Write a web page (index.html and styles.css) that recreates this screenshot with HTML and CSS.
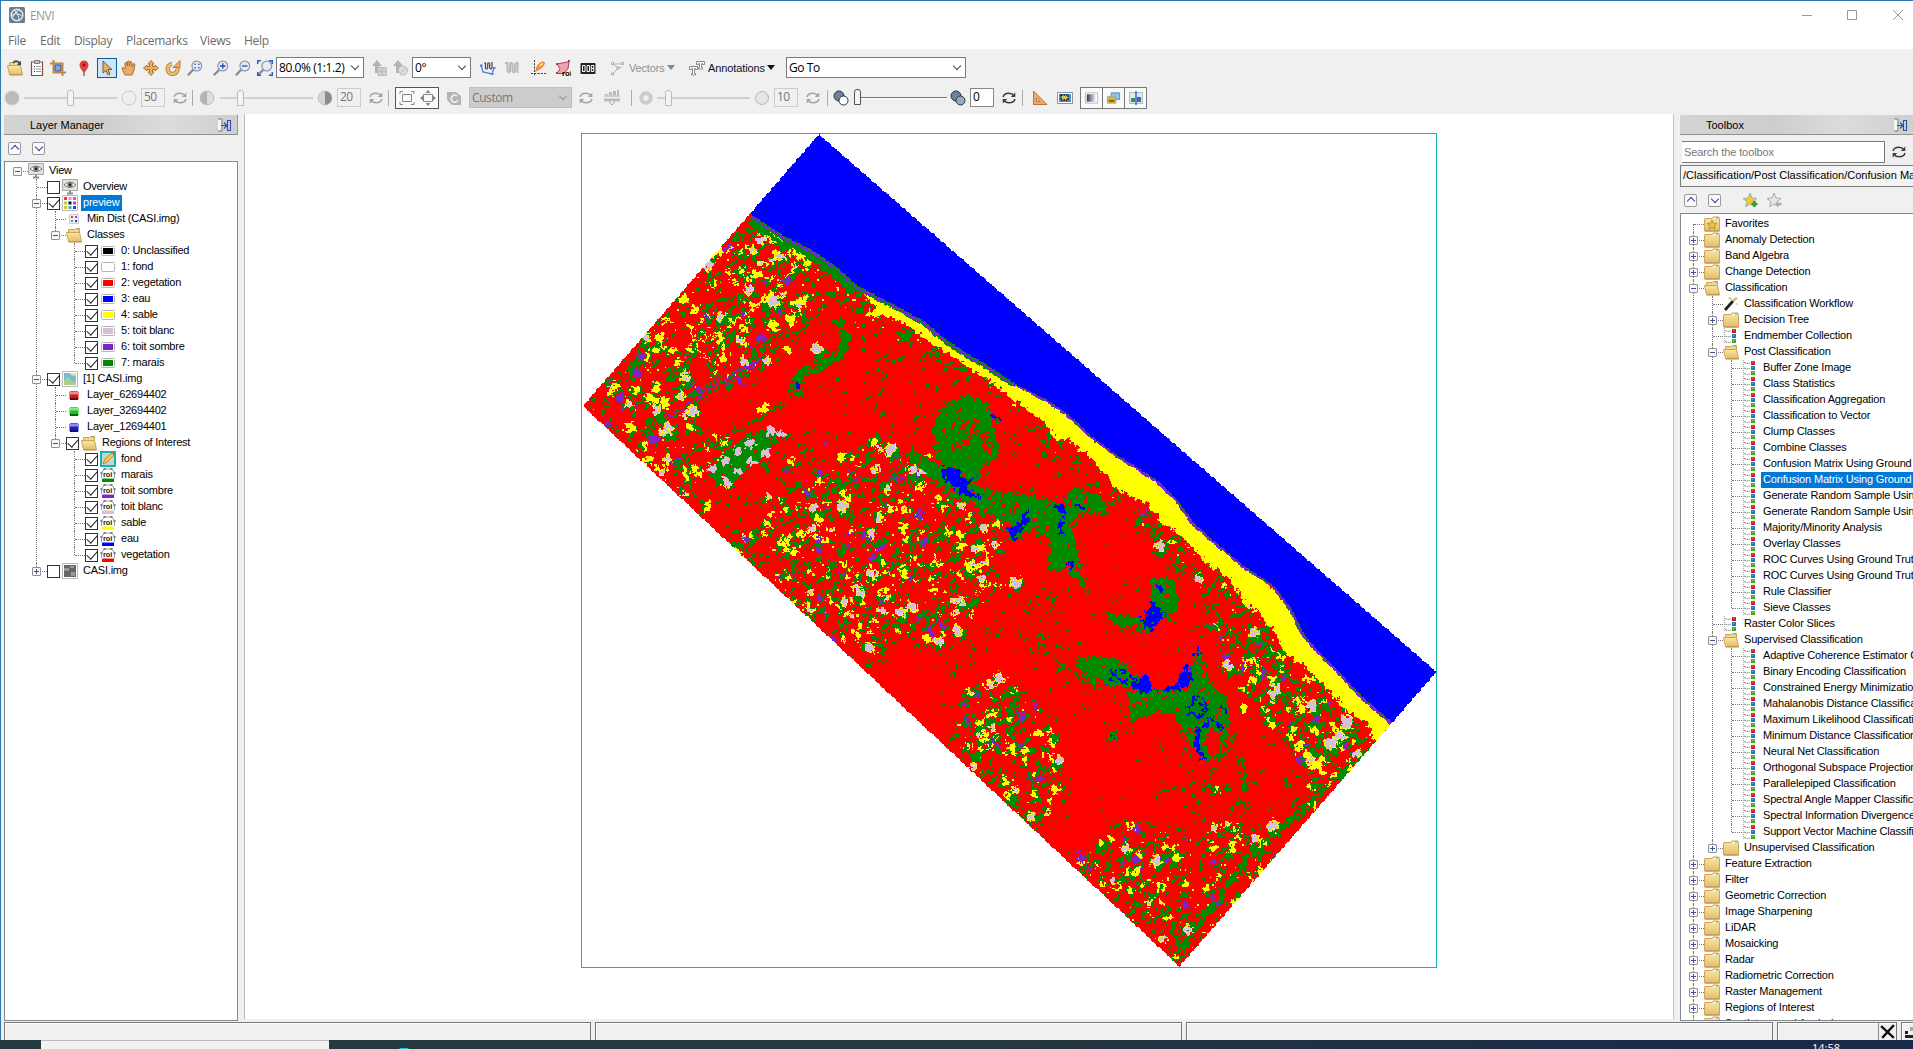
FILE: index.html
```html
<!DOCTYPE html>
<html lang="en">
<head>
<meta charset="utf-8">
<title>ENVI</title>
<link rel="stylesheet" href="styles.css">
</head>
<body>
<svg class="defs" width="0" height="0" aria-hidden="true">
  <defs>
    <linearGradient id="gold" x1="0" y1="0" x2="0" y2="1"><stop offset="0" stop-color="#fbe7a6"/><stop offset="1" stop-color="#e3bd6c"/></linearGradient>
    <linearGradient id="ramp"><stop offset="0" stop-color="#2b3a4c"/><stop offset="1" stop-color="#fff"/></linearGradient>
  </defs>
  <symbol id="folder" viewBox="0 0 16 16"><path d="M1 2.500h7l1-1.500h6v2h.5v12H.5v-12z" fill="url(#gold)" stroke="#cfa453"/><path d="M1 15h14.500" stroke="#b98d45"/><path d="M9 2.500h5" stroke="#fff6d0"/><path d="M12 2h2" stroke="#3cb0dc"/></symbol>
  <symbol id="open" viewBox="0 0 16 16"><path d="M2.500 13V2.500h6l1-1h4V8" fill="#f2d68c" stroke="#cfa453"/><path d="M.5 5.500h13l2 9h-13z" fill="url(#gold)" stroke="#cfa453"/><path d="M2.500 15h13" stroke="#b98d45"/><path d="M11 2h2" stroke="#3cb0dc"/></symbol>
  <symbol id="fav" viewBox="0 0 16 16"><use href="#folder"/><path d="M8 4l1.300 3.200 3.700.3-2.800 2.300.9 3.500L8 11.400l-3.100 1.900.9-3.500L3 7.500l3.700-.3z" fill="#e8c63c" stroke="#a8862a" stroke-width=".7"/></symbol>
  <symbol id="eye" viewBox="0 0 16 16"><path d="M.5.5h15v11H.5z" fill="#e6e3dc" stroke="#aaa59a"/><path d="M5 14.500h6M8 12v2" stroke="#8f8f8f" stroke-width="2"/><path d="M2 6q6-6 12 0-6 5-12 0z" fill="#fff" stroke="#777"/><circle cx="8" cy="5.700" r="2.700" fill="#6f8290"/><circle cx="8" cy="5.700" r="1.200" fill="#222"/></symbol>
  <symbol id="cls" viewBox="0 0 16 16"><path d="M.5.5h15v15H.5z" fill="#fff" stroke="#bbb"/><path d="M2 2h3v3H2z" fill="#f33"/><path d="M6.500 2h3v3h-3z" fill="#e8e"/><path d="M11 2h3v3h-3z" fill="#f4a"/><path d="M2 6.500h3v3H2z" fill="#9d4"/><path d="M6.500 6.500h3v3h-3z" fill="#111"/><path d="M11 6.500h3v3h-3z" fill="#c3e"/><path d="M2 11h3v3H2z" fill="#eb2"/><path d="M6.500 11h3v3h-3z" fill="#2bd"/><path d="M11 11h3v3h-3z" fill="#43e"/></symbol>
  <symbol id="mini" viewBox="0 0 16 16"><path d="M3.500 3.500h9v9h-9z" fill="#eee" stroke="#ccc"/><path d="M5 5h2v2H5z" fill="#e33"/><path d="M9 5h2v2H9z" fill="#b3d"/><path d="M5 9h2v2H5z" fill="#3b5"/><path d="M9 9h2v2H9z" fill="#33d"/></symbol>
  <symbol id="sw" viewBox="0 0 16 16"><rect x="1.500" y="3.500" width="13" height="9" rx="1" fill="#fff" stroke="#b5b5b5"/><path d="M3 5h10v6H3z" fill="currentColor"/></symbol>
  <symbol id="cube" viewBox="0 0 16 16"><rect x="3.500" y="4" width="9" height="9" rx="1.500" fill="currentColor"/><path d="M4 4.500h8v3H4z" fill="#fff" opacity=".5"/><path d="M4 11h8v2H4z" opacity=".5"/></symbol>
  <symbol id="img" viewBox="0 0 16 16"><path d="M.5.5h15v15H.5z" fill="#fff" stroke="#bbb"/><path d="M2 2h12v12H2z" fill="#79b9d8"/><path d="M2 9q4-5 7 0t5-2v7H2z" fill="#a9cf8d"/><path d="M7 2q3 4 7 2V2z" fill="#f1e2a0"/></symbol>
  <symbol id="imgg" viewBox="0 0 16 16"><path d="M.5.5h15v15H.5z" fill="#fff" stroke="#bbb"/><path d="M2 2h12v12H2z" fill="#666"/><path d="M2 5h5v3H2zM9 9h4v4H9zM8 3h4v2H8z" fill="#999"/></symbol>
  <symbol id="roi" viewBox="0 0 16 16"><path d="M1.500 11V5.500L4.500 2h7l3 3.500V11" fill="#fff" stroke="#999"/><path d="M3.500 1h2v2h-2zM10.500 1h2v2h-2zM.5 5h2v2h-2zM13.500 5h2v2h-2z" fill="#777"/><text x="3" y="10" font-size="7.500" font-weight="bold" fill="#222" font-family="Liberation Sans,sans-serif">roi</text><path d="M2 11.500h12V15H2z" fill="currentColor"/></symbol>
  <symbol id="edit" viewBox="0 0 16 16"><path d="M1 1h14v14H1z" fill="#cfd0c8" stroke="#12b5b5" stroke-width="2"/><path d="M3 13l2-5 7-6 2 2-7 7z" fill="#f0cf54" stroke="#a57a2a" stroke-width=".8"/><path d="M11.500 2l2 2 1.500-1.500L13 .5z" fill="#e25d4a"/></symbol>
  <symbol id="tool" viewBox="0 0 16 16"><path d="M1.500 0v16" stroke="#aaa" stroke-dasharray="1 1"/><path d="M2 2.500l3 1 3-.5M2 8l3 1 3-.5M2 13.500l3 1 3-.5" stroke="#888" fill="none" stroke-dasharray="2 .7"/><path d="M9 1h4v4H9z" fill="#d11a1a"/><path d="M9 6h4v4H9z" fill="#1378c4"/><path d="M9 11h4v4H9z" fill="#4aa512"/><path d="M10 2h2M10 7h2M10 12h2" stroke="#fff" opacity=".4"/></symbol>
  <symbol id="wand" viewBox="0 0 16 16"><path d="M2 14L10 5" stroke="#222" stroke-width="2.800"/><path d="M10 5l2-2" stroke="#bbb" stroke-width="2.800"/><path d="M7 1v3M5.500 2.500h3M13 1v3M11.500 2.500h3M14 7v2" stroke="#d9b83c"/></symbol>
  <symbol id="ref" viewBox="0 0 16 16"><path d="M2 7q1-3.800 6-3.800 3 0 5 2.300M14 9q-1 3.800-6 3.800-3 0-5-2.300" fill="none" stroke="currentColor" stroke-width="1.500"/><path d="M14.300 2.500v4.500H9.800zM1.700 13.500V9h4.500z" fill="currentColor"/></symbol>
  <symbol id="half" viewBox="0 0 16 16"><circle cx="8" cy="8" r="6.800" fill="#ddd" stroke="#bbb"/><path d="M8 1.200a6.800 6.800 0 0 0 0 13.600z" fill="#b4b4b4"/></symbol>
  <symbol id="mag" viewBox="0 0 16 16"><path d="M1.500 14.500L6 10" stroke="#8d8d8d" stroke-width="2.400" stroke-linecap="round"/><circle cx="9.800" cy="6" r="4.900" fill="#e4ecf5" stroke="#8f9bab" stroke-width="1.200"/></symbol>
  <symbol id="exp" viewBox="0 0 16 16"><path d="M1 1h4v12H1" fill="#f4f4f4" stroke="#777"/><path d="M4 7.500h5M7 4.500l3 3-3 3M10.500 2.500h3v10h-3z" fill="none" stroke="#2a4db0" stroke-width="1.100"/></symbol>
  <symbol id="two" viewBox="0 0 16 16"><circle cx="6" cy="6" r="5" fill="#71809b" stroke="#2b3448"/><circle cx="10.500" cy="10.500" r="4.500" fill="currentColor" stroke="#2b3448"/></symbol>
  <symbol id="star" viewBox="0 0 16 16"><path d="M8 1l2 5 5 .4-4 3.300 1.300 5L8 12l-4.300 2.700 1.300-5-4-3.300L6 6z" fill="currentColor" stroke="#aaa"/></symbol>
</svg>

<div class="win">
  <header class="title">
    <svg class="logo" viewBox="0 0 16 16"><rect width="16" height="16" rx="1.500" fill="#6c7e8c"/><circle cx="8" cy="8" r="5.800" fill="none" stroke="#dfe6ea" stroke-width="1.400"/><path d="M3 12Q7 1 12 4M2 9q6-5 12 1M5 3q5 3 5 11" fill="none" stroke="#e5ebee"/></svg>
    <span class="name">ENVI</span>
    <svg class="ctl" viewBox="0 0 120 14"><path d="M14 7.500h10" stroke="#999"/><path d="M59.500 2.500h9v9h-9z" fill="none" stroke="#999"/><path d="M105 2l10 10M115 2L105 12" stroke="#999"/></svg>
  </header>
  <nav class="menu"><span>File</span><span>Edit</span><span>Display</span><span>Placemarks</span><span>Views</span><span>Help</span></nav>

  <div class="bar bar1">
    <svg viewBox="0 0 16 16"><use href="#open"/><path d="M6 3q3-4 6 0" fill="none" stroke="#345" stroke-width="1.500"/><path d="M14 1v4h-4z" fill="#345"/></svg>
    <svg viewBox="0 0 16 16"><path d="M1.500 2h11v13.500h-11z" fill="#fff" stroke="#8a4a35" stroke-width="1.200"/><path d="M4.500.5h5v3h-5z" fill="#c4c4c4" stroke="#777"/><path d="M4 6.500h1M4 9h1M4 11.500h1" stroke="#345"/><path d="M6 6.500h5M6 9h5M6 11.500h5" stroke="#999"/></svg>
    <svg viewBox="0 0 16 16"><path d="M0 3.500h12.500V16M3.500 0v12.500H16" fill="none" stroke="#c98537" stroke-width="2"/><path d="M5 5h6v6H5z" fill="#7aa7e0" stroke="#2950b0"/></svg>
    <svg viewBox="0 0 16 16"><path d="M7 16V9" stroke="#777" stroke-width="1.500"/><path d="M7 13Q2.500 8 2.500 5a4.500 4.500 0 0 1 9 0q0 3-4.500 8z" fill="#e0423f"/><circle cx="7" cy="4.800" r="1.600" fill="#8d1717"/></svg>
    <span class="sel"><svg viewBox="0 0 16 16"><path d="M4 1v12l3-2.500L9 15l2-1-2-4.500h4z" fill="#e2b069" stroke="#7a5a33"/></svg></span>
    <svg viewBox="0 0 16 16"><path d="M4 15Q1 10 1 8q1-1.500 3 1V3q1-1.500 2 0l.3 3V1.500q1-1.500 2 0V6l.7-4q1-1 1.800 0L11 7l1-3q1.500-.8 2 .3-1 8-3 10.700z" fill="#e7ac68" stroke="#a56a2c" stroke-width=".9"/></svg>
    <svg viewBox="0 0 16 16"><path d="M8 .5l3 3.500H9.500v2.500H12V5l3.500 3-3.500 3V9.500H9.500V12H11l-3 3.500L5 12h1.500V9.500H4V11L.5 8 4 5v1.500h2.500V4H5z" fill="#e9b063" stroke="#a8702e"/></svg>
    <svg viewBox="0 0 16 16"><path d="M12.500 8A5 5 0 1 1 7 4" fill="none" stroke="#b9792f" stroke-width="4.200"/><path d="M12.500 8A5 5 0 1 1 7 4" fill="none" stroke="#eebb72" stroke-width="2.600"/><path d="M15 .5v7H8z" fill="#e9b063" stroke="#b9792f"/></svg>
    <svg viewBox="0 0 16 16"><use href="#mag"/><path d="M8 5V4h1M11 4h1v1M12 7v1h-1M9 8H8V7" fill="none" stroke="#2447b5"/></svg>
    <svg viewBox="0 0 16 16"><use href="#mag"/><path d="M7 6h5.500M9.800 3.300v5.500" stroke="#2447b5" stroke-width="1.300"/></svg>
    <svg viewBox="0 0 16 16"><use href="#mag"/><path d="M7 6h5.500" stroke="#2447b5" stroke-width="1.300"/></svg>
    <svg viewBox="0 0 16 16"><use href="#mag"/><path d="M.7 4V.7H4M12 .7h3.300V4M15.300 12v3.300H12M4 15.300H.7V12" fill="none" stroke="#2458d5" stroke-width="1.500"/></svg>
    <span class="combo"><b class="wide">80.0% (1:1.2)</b><i class="chev"></i></span>
    <svg viewBox="0 0 16 16"><path d="M6 0l5 6H8v7H4V6H1z" fill="#b3b3b3"/><path d="M7 7.500h8.500v8H7zM7 11.500h8.500M11 7.500v8" fill="#d2d2d2" stroke="#bbb"/></svg>
    <svg viewBox="0 0 16 16"><path d="M6 0l5 6H8v7H4V6H1z" fill="#b3b3b3"/><circle cx="11" cy="10.500" r="4.500" fill="#ddd" stroke="#bbb"/><path d="M8 14l6-7" stroke="#bbb"/></svg>
    <span class="combo"><b class="wide">0°</b><i class="chev"></i></span>
    <svg viewBox="0 0 16 16"><path d="M1 5l2 7 9 2 2-6" fill="none" stroke="#4f7fd6" stroke-width="1.300"/><path d="M0 4.500h2.500v2H0zM11 13h2.500v2H11zM13 7h2.500v2H13z" fill="#4f7fd6"/><path d="M4 3h1.500v5q1.200 2 2.200 0V3.500q1-1.500 2 0V8q1.200 2 2.300 0V2" fill="none" stroke="#444" stroke-width="1.200"/></svg>
    <svg viewBox="0 0 16 16"><path d="M1 3h2.500v8q1.300 2.500 2.600 0V4q1.200-2 2.400 0v7q1.300 2.500 2.600 0V4q1-1.500 2.400-1v10" fill="none" stroke="#b9b9b9" stroke-width="2"/></svg>
    <svg viewBox="0 0 16 16"><path d="M3.500 0v16M0 13.500h16" stroke="#333" stroke-dasharray="2 1.300"/><path d="M4 12Q5 4 11 1.500q3-.5 3 2Q12 9 4 12z" fill="#f08a35"/><path d="M8 7q1-4 4-4 1 2-4 4z" fill="#ffe08a"/></svg>
    <svg viewBox="0 0 16 16"><path d="M2 4l8-1.500 4-1-1 7-4 5H2l3-5z" fill="#e9a6ae" stroke="#b43a4c"/><path d="M1 3h2v2H1zM13 0h2v2h-2zM1 12h2v2H1z" fill="#b43a4c"/><text x="7" y="15.500" font-size="8" font-weight="bold" font-family="Liberation Sans,sans-serif">roi</text></svg>
    <svg viewBox="0 0 16 16"><rect x=".5" y="3" width="15" height="11" rx="1" fill="#222"/><path d="M2.500 5.500h2.500v6H2.500zM7 5.500h2.500v6H7zM11.300 5.500h2.500v6h-2.500zM11.300 8.500h2.500" fill="none" stroke="#fff"/></svg>
    <svg viewBox="0 0 16 16"><path d="M2 4h10M2 4l5 4-5 6M7 8l4-1" fill="none" stroke="#b5b5b5"/><path d="M.5 2.500h2v2h-2zM10.500 2.500h2v2h-2zM6 7h2v2H6zM.5 13h2v2h-2z" fill="#fff" stroke="#aaa"/></svg>
    <b class="off">Vectors</b><i class="caret off"></i>
    <svg viewBox="0 0 16 16"><path d="M7.500 1.500h8v3h-2v-1h-1v4h1v1.500h-4V7.500h1v-4h-1v1h-2z" fill="#fff" stroke="#888"/><path d="M.5 6.500h8v3h-2v-1h-1v5h1V15h-4v-1.500h1v-5h-1v1h-2z" fill="#fff" stroke="#888"/></svg>
    <b class="ann">Annotations</b><i class="caret"></i>
    <span class="combo goto"><b class="wide">Go To</b><i class="chev"></i></span>
  </div>

  <div class="bar bar2">
    <svg viewBox="0 0 16 16"><circle cx="8" cy="8" r="7" fill="#bbb" stroke="#ccc"/></svg>
    <span class="slide"><i class="thumb m"></i></span>
    <svg viewBox="0 0 16 16"><circle cx="8" cy="8" r="7" fill="#eee" stroke="#c8c8c8"/></svg>
    <span class="inp off">50</span>
    <svg class="dim" viewBox="0 0 16 16"><use href="#ref"/></svg><i class="sep"></i>
    <svg viewBox="0 0 16 16"><use href="#half"/></svg>
    <span class="slide"><i class="thumb l"></i></span>
    <svg viewBox="0 0 16 16"><circle cx="8" cy="8" r="6.800" fill="#d5d5d5" stroke="#bbb"/><path d="M8 1.200a6.800 6.800 0 0 1 0 13.600z" fill="#8d8d8d"/></svg>
    <span class="inp off">20</span>
    <svg class="dim" viewBox="0 0 16 16"><use href="#ref"/></svg><i class="sep"></i>
    <span class="pair"><svg viewBox="0 0 16 16"><path d="M3.500 4.500h9v7h-9zM1 4V1.500h3M12 1.500h3V4M15 12v2.500h-3M4 14.500H1V12" fill="none" stroke="#888"/></svg><svg viewBox="0 0 16 16"><path d="M3.500 4.500h9v7h-9z" fill="none" stroke="#888"/><path d="M8 0l2.500 3h-5zM8 16l2.500-3h-5zM0 8l3-2.500v5zM16 8l-3-2.500v5z" fill="#888"/></svg></span>
    <svg viewBox="0 0 16 16"><path d="M1 2h9l5 4v9H6L1 10z" fill="#b3b3b3"/><path d="M11 6a3.500 3.500 0 1 0 1 4" fill="none" stroke="#eee" stroke-width="1.800"/></svg>
    <span class="combo dis"><b class="wide">Custom</b><i class="chev"></i></span>
    <svg class="dim" viewBox="0 0 16 16"><use href="#ref"/></svg>
    <svg viewBox="0 0 16 16"><path d="M0 6h16" stroke="#aaa"/><path d="M1 5V4h3v1zM5 5V2h3v3zM9 5V1h3v4zM13 5V0h2v5zM0 8.500h16v3H0z" fill="#bbb"/><path d="M6 10h4v3l-2 2-2-2z" fill="#eee" stroke="#aaa"/></svg><i class="sep"></i>
    <svg viewBox="0 0 16 16"><circle cx="8" cy="8" r="4.800" fill="#eee" stroke="#ccc" stroke-width="4"/></svg>
    <span class="slide"><i class="thumb s"></i></span>
    <svg viewBox="0 0 16 16"><circle cx="8" cy="8" r="6.500" fill="#e6e6e6" stroke="#b5b5b5"/></svg>
    <span class="inp off">10</span>
    <svg class="dim" viewBox="0 0 16 16"><use href="#ref"/></svg><i class="sep"></i>
    <svg class="cw" viewBox="0 0 16 16"><use href="#two"/></svg>
    <span class="slide on"><i class="thumb z"></i></span>
    <svg class="cg" viewBox="0 0 16 16"><use href="#two"/></svg>
    <span class="inp">0</span>
    <svg class="dark" viewBox="0 0 16 16"><use href="#ref"/></svg><i class="sep"></i>
    <svg viewBox="0 0 16 16"><path d="M1.500 1v13.500H15zM4.500 8v3.500H8z" fill="#e6aa6c" fill-rule="evenodd" stroke="#b87838"/></svg>
    <svg viewBox="0 0 16 16"><path d="M.5 2.500h15v11H.5z" fill="#fff" stroke="#8296a8"/><path d="M2 4h12v8H2z" fill="#4f8fc4"/><path d="M4 5h7v5H4z" fill="#d9bd52" stroke="#111" stroke-width="1.300" stroke-dasharray="1.500 1"/></svg>
    <span class="trio">
      <svg viewBox="0 0 16 16"><path d="M1.500 2.500h13v11h-13z" fill="#fff" stroke="#a9bccb"/><path d="M3 4h10v8H3z" fill="url(#ramp)"/></svg>
      <svg viewBox="0 0 16 16"><path d="M5.500 2.500h9v7h-9z" fill="#8fc1ea" stroke="#5b8ab8"/><path d="M1.500 6.500h9v7h-9z" fill="#dfb52c" stroke="#9aa7b5"/><path d="M3 10h6v2H3z" fill="#7d6313"/></svg>
      <svg viewBox="0 0 16 16"><path d="M1.500 2.500h13v11h-13z" fill="#dceaf3" stroke="#a9bccb"/><path d="M3 8h4v4H3z" fill="#3a8a6a"/><path d="M9 7h4v5H9z" fill="#567"/><path d="M8 1v14" stroke="#2447d5" stroke-width="1.300"/></svg>
    </span>
  </div>

  <main class="body">
    <section class="left">
      <div class="head"><span>Layer Manager</span><svg viewBox="0 0 16 16"><use href="#exp"/></svg></div>
      <div class="ud"><i class="up"></i><i class="dn"></i></div>
      <div class="tbox">
        <ul class="tree">
          <li class="solo"><div class="r"><i class="x m"></i><svg><use href="#eye"/></svg><span>View</span></div>
            <ul>
              <li><div class="r"><i class="cb"></i><svg><use href="#eye"/></svg><span>Overview</span></div></li>
              <li><div class="r"><i class="x m"></i><i class="cb on"></i><svg><use href="#cls"/></svg><span class="hl">preview</span></div>
                <ul>
                  <li><div class="r"><svg><use href="#mini"/></svg><span>Min Dist (CASI.img)</span></div></li>
                  <li><div class="r"><i class="x m"></i><svg><use href="#open"/></svg><span>Classes</span></div>
                    <ul>
                      <li><div class="r"><i class="cb on"></i><svg class="k0"><use href="#sw"/></svg><span>0: Unclassified</span></div></li>
                      <li><div class="r"><i class="cb on"></i><svg class="k1"><use href="#sw"/></svg><span>1: fond</span></div></li>
                      <li><div class="r"><i class="cb on"></i><svg class="k2"><use href="#sw"/></svg><span>2: vegetation</span></div></li>
                      <li><div class="r"><i class="cb on"></i><svg class="k3"><use href="#sw"/></svg><span>3: eau</span></div></li>
                      <li><div class="r"><i class="cb on"></i><svg class="k4"><use href="#sw"/></svg><span>4: sable</span></div></li>
                      <li><div class="r"><i class="cb on"></i><svg class="k5"><use href="#sw"/></svg><span>5: toit blanc</span></div></li>
                      <li><div class="r"><i class="cb on"></i><svg class="k6"><use href="#sw"/></svg><span>6: toit sombre</span></div></li>
                      <li><div class="r"><i class="cb on"></i><svg class="k7"><use href="#sw"/></svg><span>7: marais</span></div></li>
                    </ul></li>
                </ul></li>
              <li><div class="r"><i class="x m"></i><i class="cb on"></i><svg><use href="#img"/></svg><span>[1] CASI.img</span></div>
                <ul>
                  <li><div class="r"><svg class="cr"><use href="#cube"/></svg><span>Layer_62694402</span></div></li>
                  <li><div class="r"><svg class="cgn"><use href="#cube"/></svg><span>Layer_32694402</span></div></li>
                  <li><div class="r"><svg class="cbl"><use href="#cube"/></svg><span>Layer_12694401</span></div></li>
                  <li><div class="r"><i class="x m"></i><i class="cb on"></i><svg><use href="#open"/></svg><span>Regions of Interest</span></div>
                    <ul>
                      <li><div class="r"><i class="cb on"></i><svg><use href="#edit"/></svg><span>fond</span></div></li>
                      <li><div class="r"><i class="cb on"></i><svg class="k7"><use href="#roi"/></svg><span>marais</span></div></li>
                      <li><div class="r"><i class="cb on"></i><svg class="k6"><use href="#roi"/></svg><span>toit sombre</span></div></li>
                      <li><div class="r"><i class="cb on"></i><svg class="k5"><use href="#roi"/></svg><span>toit blanc</span></div></li>
                      <li><div class="r"><i class="cb on"></i><svg class="k4"><use href="#roi"/></svg><span>sable</span></div></li>
                      <li><div class="r"><i class="cb on"></i><svg class="k3"><use href="#roi"/></svg><span>eau</span></div></li>
                      <li><div class="r"><i class="cb on"></i><svg class="k2"><use href="#roi"/></svg><span>vegetation</span></div></li>
                    </ul></li>
                </ul></li>
              <li><div class="r"><i class="x p"></i><i class="cb"></i><svg><use href="#imgg"/></svg><span>CASI.img</span></div></li>
            </ul></li>
        </ul>
      </div>
    </section>

    <section class="view"><div class="frame"><canvas id="map" width="854" height="833"></canvas></div></section>

    <section class="right">
      <div class="head"><span>Toolbox</span><svg viewBox="0 0 16 16"><use href="#exp"/></svg></div>
      <div class="search"><span class="field">Search the toolbox</span><svg class="dark" viewBox="0 0 16 16"><use href="#ref"/></svg></div>
      <div class="path"><span>/Classification/Post Classification/Confusion Matrix Using Ground</span></div>
      <div class="ud"><i class="up"></i><i class="dn"></i><svg class="st" viewBox="0 0 16 16"><use href="#star"/><path d="M12.500 9v6M9.500 12h6" stroke="#2f9e2f" stroke-width="2.400"/></svg><svg class="st g" viewBox="0 0 16 16"><use href="#star"/><path d="M9.500 12h6" stroke="#aaa" stroke-width="2.400"/></svg></div>
      <div class="tbox">
        <ul class="tree">
          <li class="first"><div class="r"><svg><use href="#fav"/></svg><span>Favorites</span></div></li>
          <li><div class="r"><i class="x p"></i><svg><use href="#folder"/></svg><span>Anomaly Detection</span></div></li>
          <li><div class="r"><i class="x p"></i><svg><use href="#folder"/></svg><span>Band Algebra</span></div></li>
          <li><div class="r"><i class="x p"></i><svg><use href="#folder"/></svg><span>Change Detection</span></div></li>
          <li><div class="r"><i class="x m"></i><svg><use href="#open"/></svg><span>Classification</span></div>
            <ul>
              <li><div class="r"><svg><use href="#wand"/></svg><span>Classification Workflow</span></div></li>
              <li><div class="r"><i class="x p"></i><svg><use href="#folder"/></svg><span>Decision Tree</span></div></li>
              <li><div class="r"><svg><use href="#tool"/></svg><span>Endmember Collection</span></div></li>
              <li><div class="r"><i class="x m"></i><svg><use href="#open"/></svg><span>Post Classification</span></div>
                <ul>
                  <li><div class="r"><svg><use href="#tool"/></svg><span>Buffer Zone Image</span></div></li>
                  <li><div class="r"><svg><use href="#tool"/></svg><span>Class Statistics</span></div></li>
                  <li><div class="r"><svg><use href="#tool"/></svg><span>Classification Aggregation</span></div></li>
                  <li><div class="r"><svg><use href="#tool"/></svg><span>Classification to Vector</span></div></li>
                  <li><div class="r"><svg><use href="#tool"/></svg><span>Clump Classes</span></div></li>
                  <li><div class="r"><svg><use href="#tool"/></svg><span>Combine Classes</span></div></li>
                  <li><div class="r"><svg><use href="#tool"/></svg><span>Confusion Matrix Using Ground Truth Image</span></div></li>
                  <li><div class="r"><svg><use href="#tool"/></svg><span class="hl">Confusion Matrix Using Ground Truth ROIs</span></div></li>
                  <li><div class="r"><svg><use href="#tool"/></svg><span>Generate Random Sample Using Ground Truth Image</span></div></li>
                  <li><div class="r"><svg><use href="#tool"/></svg><span>Generate Random Sample Using Ground Truth ROIs</span></div></li>
                  <li><div class="r"><svg><use href="#tool"/></svg><span>Majority/Minority Analysis</span></div></li>
                  <li><div class="r"><svg><use href="#tool"/></svg><span>Overlay Classes</span></div></li>
                  <li><div class="r"><svg><use href="#tool"/></svg><span>ROC Curves Using Ground Truth Image</span></div></li>
                  <li><div class="r"><svg><use href="#tool"/></svg><span>ROC Curves Using Ground Truth ROIs</span></div></li>
                  <li><div class="r"><svg><use href="#tool"/></svg><span>Rule Classifier</span></div></li>
                  <li><div class="r"><svg><use href="#tool"/></svg><span>Sieve Classes</span></div></li>
                </ul></li>
              <li><div class="r"><svg><use href="#tool"/></svg><span>Raster Color Slices</span></div></li>
              <li><div class="r"><i class="x m"></i><svg><use href="#open"/></svg><span>Supervised Classification</span></div>
                <ul>
                  <li><div class="r"><svg><use href="#tool"/></svg><span>Adaptive Coherence Estimator Classification</span></div></li>
                  <li><div class="r"><svg><use href="#tool"/></svg><span>Binary Encoding Classification</span></div></li>
                  <li><div class="r"><svg><use href="#tool"/></svg><span>Constrained Energy Minimization Classification</span></div></li>
                  <li><div class="r"><svg><use href="#tool"/></svg><span>Mahalanobis Distance Classification</span></div></li>
                  <li><div class="r"><svg><use href="#tool"/></svg><span>Maximum Likelihood Classification</span></div></li>
                  <li><div class="r"><svg><use href="#tool"/></svg><span>Minimum Distance Classification</span></div></li>
                  <li><div class="r"><svg><use href="#tool"/></svg><span>Neural Net Classification</span></div></li>
                  <li><div class="r"><svg><use href="#tool"/></svg><span>Orthogonal Subspace Projection Classification</span></div></li>
                  <li><div class="r"><svg><use href="#tool"/></svg><span>Parallelepiped Classification</span></div></li>
                  <li><div class="r"><svg><use href="#tool"/></svg><span>Spectral Angle Mapper Classification</span></div></li>
                  <li><div class="r"><svg><use href="#tool"/></svg><span>Spectral Information Divergence Classification</span></div></li>
                  <li><div class="r"><svg><use href="#tool"/></svg><span>Support Vector Machine Classification</span></div></li>
                </ul></li>
              <li><div class="r"><i class="x p"></i><svg><use href="#folder"/></svg><span>Unsupervised Classification</span></div></li>
            </ul></li>
          <li><div class="r"><i class="x p"></i><svg><use href="#folder"/></svg><span>Feature Extraction</span></div></li>
          <li><div class="r"><i class="x p"></i><svg><use href="#folder"/></svg><span>Filter</span></div></li>
          <li><div class="r"><i class="x p"></i><svg><use href="#folder"/></svg><span>Geometric Correction</span></div></li>
          <li><div class="r"><i class="x p"></i><svg><use href="#folder"/></svg><span>Image Sharpening</span></div></li>
          <li><div class="r"><i class="x p"></i><svg><use href="#folder"/></svg><span>LiDAR</span></div></li>
          <li><div class="r"><i class="x p"></i><svg><use href="#folder"/></svg><span>Mosaicking</span></div></li>
          <li><div class="r"><i class="x p"></i><svg><use href="#folder"/></svg><span>Radar</span></div></li>
          <li><div class="r"><i class="x p"></i><svg><use href="#folder"/></svg><span>Radiometric Correction</span></div></li>
          <li><div class="r"><i class="x p"></i><svg><use href="#folder"/></svg><span>Raster Management</span></div></li>
          <li><div class="r"><i class="x p"></i><svg><use href="#folder"/></svg><span>Regions of Interest</span></div></li>
          <li class="more"><div class="r"><svg><use href="#folder"/></svg><span>Spatiotemporal Analysis</span></div></li>
        </ul>
      </div>
    </section>
  </main>

  <footer class="status">
    <span></span><span></span><span></span>
    <span class="stop"><svg viewBox="0 0 16 16"><path d="M2 3l12 11M14 2L3 14" stroke="#111" stroke-width="2.200"/></svg></span>
    <span class="net"><svg viewBox="0 0 12 16"><path d="M2 8h3v3H2zM2 12h10v3H2z" fill="#222"/><path d="M7 4h4v4H7z" fill="#aaa"/></svg></span>
  </footer>
</div>
<div class="task"><span class="app"></span><span class="dot"></span><span class="clock">14:58</span></div>
<script src="map.js"></script>
</body>
</html>
```
FILE: styles.css
```css
* { box-sizing: border-box; }
html, body { margin: 0; height: 100%; overflow: hidden; }
body {
  width: 1913px; height: 1049px; display: flex; flex-direction: column;
  background: #fff; color: #000;
  font: 11px/16px "Liberation Sans", Arial, sans-serif; letter-spacing: -.17px;
}
ul { list-style: none; margin: 0; padding: 0; }
b, i { font-weight: normal; font-style: normal; }
svg { display: block; flex: none; width: 16px; height: 16px; }
.defs { position: absolute; width: 0; height: 0; }

.win { height: 1040px; flex: none; display: flex; flex-direction: column; border-top: 1px solid #2a7ab0; border-left: 1px solid #2a7ab0; background: #f0f0f0; overflow: hidden; }
.title { height: 28px; flex: none; background: #fff; display: flex; align-items: center; padding: 0 0 0 8px; }
.name { margin-left: 5px; color: #999; font: 12px "Open Sans", sans-serif; letter-spacing: -.55px; }
.ctl { width: 120px; height: 14px; margin-left: auto; margin-right: 5px; }
.menu { height: 20px; flex: none; background: #fff; display: flex; padding-left: 7px; font: 12px/23px "Open Sans", sans-serif; color: #6a6a6a; letter-spacing: -.25px; }
.menu span:nth-child(1) { width: 32px; }
.menu span:nth-child(2) { width: 34px; }
.menu span:nth-child(3) { width: 52px; letter-spacing: -.35px; }
.menu span:nth-child(4) { width: 74px; }
.menu span:nth-child(5) { width: 44px; }

.bar { display: grid; flex: none; align-items: center; padding-left: 6px; }
.bar1 { height: 36px; padding-top: 1px; grid-template-columns: 23px 20px 27px 20px 24px 22px 22px 22px 26px 22px 22px 19px 95px 21px 20px 68px 24px 27px 24px 25px 31px 18px 38px 22px 19px 59px 19px 180px; }
.bar2 { height: 29px; padding-left: 3px; padding-bottom: 4px; grid-template-columns: 20px 97px 20px 32px 18px 8px 21px 97px 20px 32px 18px 8px 51px 23px 110px 25px 26px 8px 19px 97px 20px 32px 20px 7px 21px 96px 20px 32px 19px 11px 25px 23px 67px; }
.bar b.off { color: #8f8f8f; }
.ann { color: #111126; letter-spacing: -.1px; }
.sel { width: 20px; height: 20px; background: #cde6f7; border: 1px solid #0a5a9c; display: flex; justify-content: center; align-items: center; }
.combo { height: 21px; border: 1px solid #7a7a7a; background: #fff; display: flex; align-items: center; justify-content: space-between; padding: 0 4px 0 2px; font: 12px/16px "Open Sans", sans-serif; letter-spacing: -.42px; }
.bar1 > .combo:nth-child(13) { width: 88px; }
.bar1 > .combo:nth-child(16) { width: 59px; }
.combo.dis { width: 103px; background: #ccc; border-color: #bfbfbf; color: #777; }
.chev { width: 6px; height: 6px; border: solid #444; border-width: 0 1px 1px 0; transform: translateY(-2px) rotate(45deg); margin-right: 1px; }
.dis .chev { border-color: #999; }
.caret { border: 4px solid transparent; border-top: 5px solid #111; border-bottom: 0; width: 8px; }
.caret.off { border-top-color: #888; }
.slide { width: 93px; height: 2px; background: #d0d0d0; display: flex; align-items: center; margin: 0; }
.slide.on { background: #76766c; border-bottom: 1px solid #fff; }
.thumb { width: 7px; height: 16px; background: #f4f4f4; border: 1px solid #bdbdbd; border-radius: 3px 3px 0 0; flex: none; }
.thumb.m { margin-left: 43px; }
.thumb.l { margin-left: 17px; }
.thumb.s { margin-left: 8px; }
.thumb.z { border-color: #555; }
.inp { width: 24px; height: 19px; border: 1px solid #888; background: #fff; font: 12px/16px "Open Sans", sans-serif; padding-left: 2px; letter-spacing: -.6px; }
.inp.off { background: #f0f0f0; border-color: #ccc; color: #777; }
.sep { width: 1px; height: 16px; background: #aaa; margin-left: 1px; }
.dim { color: #a3a3a3; }
.dark { color: #3c3c3c; }
.bar .dim, .bar .dark { margin-left: -1px; }
.cw { color: #fff; }
.cg { color: #9aa7bc; }
.pair { width: 44px; height: 22px; display: flex; justify-content: space-around; align-items: center; background: #fafafa; border: 1px solid #555; }
.trio { width: 67px; height: 22px; display: flex; align-items: center; background: #fafafa; border: 1px solid #777; }
.trio svg { width: 22px; height: 20px; padding: 2px 3px; border-right: 1px solid #777; }
.trio svg:last-child { border-right: 0; }

.body { flex: none; height: 907px; display: flex; overflow: hidden; }
.left { width: 234px; flex: none; margin-left: 3px; display: flex; flex-direction: column; }
.head { height: 21px; flex: none; display: flex; align-items: center; justify-content: space-between; padding: 1px 4px 0 26px; background: linear-gradient(90deg, #d4d4d4, #cdcdcd 40%, #dcdcdc 70%, #cfcfcf); border-top: 1px solid #f0f0f0; border-right: 1px solid #999; border-bottom: 1px solid #909090; letter-spacing: 0; }
.head svg { margin-top: 2px; }
.ud { height: 26px; flex: none; display: flex; align-items: center; gap: 11px; padding-left: 4px; }
.ud i { width: 13px; height: 13px; border: 1px solid #9a9a9a; border-radius: 2px; background: #fafafa; display: flex; justify-content: center; align-items: center; }
.ud i::after { content: ""; width: 5px; height: 5px; border: solid #2948a5; }
.ud .up::after { border-width: 1.500px 0 0 1.500px; transform: translateY(1px) rotate(45deg); }
.ud .dn::after { border-width: 0 1.500px 1.500px 0; transform: translateY(-1px) rotate(45deg); }
.left .tbox { height: 860px; }
.tbox { background: #fff; border: 1px solid #828790; overflow: hidden; padding: 1px 0 0 3px; white-space: nowrap; }

.tree li { position: relative; padding-left: 20px; }
.tree ul { margin-left: -1px; }
.tree li::before { content: ""; position: absolute; left: 9px; top: 0; bottom: 0; border-left: 1px dotted #777; }
.tree li:last-child::before { bottom: auto; height: 8px; }
.tree li.more:last-child::before { height: 16px; }
.tree li.first::before { top: 8px; }
.tree li.solo::before { display: none; }
.r { position: relative; height: 16px; display: flex; align-items: center; }
.r::before { content: ""; position: absolute; left: -10px; top: 8px; width: 10px; border-top: 1px dotted #777; }
.r span { padding: 0 2px; margin-left: 3px; line-height: 15px; height: 16px; }
.r .hl { background: #0078d7; color: #fff; }
.left .tree .hl { padding-right: 3px; }
.left .r span { letter-spacing: -.22px; }
.x { position: absolute; left: -15px; top: 4px; width: 9px; height: 9px; border: 1px solid #919191; border-radius: 1px; background: linear-gradient(#3a56a0, #3a56a0) 1px 3px / 5px 1px no-repeat #f7f7f7; }
.x.p { background: linear-gradient(#3a56a0, #3a56a0) 1px 3px / 5px 1px no-repeat, linear-gradient(#3a56a0, #3a56a0) 3px 1px / 1px 5px no-repeat #f7f7f7; }
.cb { width: 13px; height: 13px; flex: none; border: 1px solid #333; background: #fff; margin: 0 2px 0 0; display: flex; justify-content: center; }
.cb.on::after { content: ""; width: 5px; height: 9px; border: solid #222; border-width: 0 1.500px 1.500px 0; transform: translateY(-1px) rotate(42deg); }
.k0 { color: #000; } .k1 { color: #fff; } .k2 { color: #f00; } .k3 { color: #00f; }
.k4 { color: #ff0; } .k5 { color: #d8bfd8; } .k6 { color: #7b26cd; } .k7 { color: #008b00; }
.cr { color: #d01818; } .cgn { color: #18c418; } .cbl { color: #1c1cc8; }

.view { width: 1430px; flex: none; height: 905px; margin-left: 6px; background: #fff; border-left: 1px solid #b8b8b8; border-right: 1px solid #c4c4c4; padding: 19px 0 0 336px; }
.frame { width: 856px; height: 835px; border: 1px solid #12b5b5; }
.frame canvas { display: block; }

.right { width: 233px; flex: none; margin-left: 6px; display: flex; flex-direction: column; overflow: hidden; }
.right .head { padding-right: 0; border-right: 0; }
.right .head svg { margin-right: 4px; }
.search { height: 30px; flex: none; display: flex; align-items: center; padding: 3px 0 0 2px; gap: 6px; }
.field { width: 203px; height: 22px; border: 1px solid #7a7a7a; border-left: 0; background: #fff; color: #777; line-height: 20px; padding-left: 2px; letter-spacing: -.1px; }
.path { height: 22px; flex: none; border: 1px solid #7a7a7a; border-right: 0; background: #f4f4f4; line-height: 18px; padding-left: 2px; white-space: nowrap; overflow: hidden; letter-spacing: .01px; }
.right .st { color: #e8cf2e; margin-left: 10px; }
.right .st.g { color: #e8e8e8; margin-left: -3px; }
.right .tbox { height: 808px; flex: none; border-right: 0; padding-left: 3px; padding-top: 2px; }

.status { flex: none; height: 20px; display: flex; gap: 4px; padding: 1px 0 0 3px; overflow: hidden; background: #f0f0f0; }
.status > span { width: 587px; height: 30px; flex: none; border: 1px solid #777; box-shadow: inset 1px 1px #fff; }
.status > .stop { width: 120px; display: flex; justify-content: flex-end; }
.stop svg { width: 18px; height: 17px; border-left: 1px solid #888; }
.status > .net { width: 20px; padding-left: 1px; }
.net svg { width: 12px; }

.task { height: 9px; flex: none; display: flex; overflow: hidden; background: linear-gradient(90deg, #253941, #26383f 50%, #1b2a48 88%); }
.app { width: 288px; margin-left: 41px; background: #f2f2f2; border-top: 1px solid #bbb; }
.dot { width: 10px; height: 2px; margin: 8px 0 0 70px; background: #23c3d6; border-radius: 4px 4px 0 0; }
.clock { width: 101px; margin-left: auto; color: #fff; font: 11px/14px "Open Sans", sans-serif; padding-top: 1px; letter-spacing: 0; }
```
FILE: map.js
```js
// Draws the classified raster: class polygons first, then a per-pixel pass
// that roughens the edges and adds scattered marsh pixels by local density.
const OX = 582, OY = 134, W = 854, H = 833;
const PAL = { r: [255, 0, 0], b: [0, 0, 255], y: [255, 255, 0], t: [216, 191, 216], p: [123, 38, 205], g: [0, 139, 0] };
const css = k => `rgb(${PAL[k].join()})`;
let seed = 7;
const rnd = () => { seed = (seed * 1664525 + 1013904223) >>> 0; return seed / 4294967296; };

const layer = () => {
  const c = document.createElement('canvas'); c.width = W; c.height = H;
  const x = c.getContext('2d', { willReadFrequently: true }); x.translate(-OX, -OY); return x;
};
const parse = s => s.trim().split(/\s+/).map(p => p.split(',').map(Number));
const trace = (c, s) => { c.beginPath(); parse(s).forEach(([x, y]) => c.lineTo(x, y)); };
const base = layer(), dens = layer();
const poly = (k, s, c = base) => { trace(c, s); c.fillStyle = PAL[k] ? css(k) : k; c.fill(); };
const line = (k, w, s, c = base) => { trace(c, s); c.strokeStyle = PAL[k] ? css(k) : k; c.lineWidth = w; c.stroke(); };
const blob = (k, x, y, rx, ry = rx, a = -.6) => { base.beginPath(); base.ellipse(x, y, rx, ry, a, 0, 7); base.fillStyle = css(k); base.fill(); };
function inside(p, x, y) {
  let c = false;
  for (let i = 0, j = p.length - 1; i < p.length; j = i++)
    if ((p[i][1] > y) !== (p[j][1] > y) && x < (p[j][0] - p[i][0]) * (y - p[i][1]) / (p[j][1] - p[i][1]) + p[i][0]) c = !c;
  return c;
}

const OUT = '818.5,134 1436,671.500 1179,966 582.500,405.500';
const SHORE1 = '751,214 783,235 810,248 837,267 857,285 890,302 923,320 943,337 970,355 980,360 1013,382';
const SHORE2 = '1013,382 1043,397 1067,413 1090,435 1113,452 1137,467 1157,480 1177,500 1193,522 1213,540 1243,565 1273,585 1290,607 1303,633 1317,650 1340,673 1363,697 1394,724';

base.fillStyle = css('r'); base.fillRect(OX, OY, W, H);
dens.fillStyle = '#000'; dens.fillRect(OX, OY, W, H);

// [green density, roofs per 1000 px, outline]
const urban = [
  [.75, 4.2, '748,214 588,405 680,495 740,445 690,425 700,395 770,370 800,330 835,300 800,250'],
  [.45, 1.5, '680,495 745,556 800,480 850,450 830,425 780,440 740,470'],
  [.8, 4.4, '725,545 800,480 880,430 960,470 1000,520 1010,590 940,640 895,645 850,665'],
  [.85, 4.4, '962,690 1000,670 1025,690 1050,720 1070,790 1030,835 1000,800 950,740'],
  [.8, 3.2, '1070,870 1120,820 1200,830 1240,815 1290,845 1179,962'],
  [.9, 4, '1193,567 1220,575 1250,600 1295,665 1345,710 1370,745 1350,790 1310,790 1290,750 1265,720 1215,650'],
  [.6, 1, '1110,485 1150,505 1195,550 1180,565 1150,530'],
  [.4, .4, '1150,800 1200,760 1300,760 1330,810 1280,850 1210,830'],
  [.35, 0, '1040,640 1120,650 1150,700 1240,690 1235,770 1190,770 1110,730'],
  [.35, 0, '840,665 900,645 1010,590 1060,600 1080,660 1000,650 960,680']
];
for (const [d, , s] of urban) poly(`rgb(${d * 255},0,0)`, s, dens);
poly('#600', '860,315 1000,400 1110,490 1100,500 980,440 900,440 850,390', dens);
const thick = (v, w, s) => line(`rgb(${v * 255},0,0)`, w, s, dens);
thick(.8, 14, '800,262 870,315 960,365 1010,400 1060,450 1115,500 1190,575 1250,605 1300,665 1370,740');
thick(.95, 34, '815,262 850,295 870,320');
thick(.6, 12, '640,560 740,470 880,460');

// lanes between the houses
['618,443 700,400 783,332', '650,473 720,440 783,403 800,370', '737,547 800,515 875,455', '632,407 700,350', '840,605 900,560 950,520',
 '1100,840 1150,900 1180,945', '780,640 850,570', '1190,560 1220,620 1270,680 1340,770',
 '990,690 1040,800', '1240,830 1265,870', '1040,650 1100,690'].forEach(s => line('g', 2.200, s));
line('g', 5, '1179,950 1250,855 1379,742');
line('y', 1.800, '697,343 730,325 770,295 797,263'); line('y', 1.500, '690,330 700,350 714,365');
line('p', 1.500, '670,415 720,380 760,360');

// scattered roofs
urban.forEach(([, per, s]) => {
  const pts = parse(s), xs = pts.map(p => p[0]), ys = pts.map(p => p[1]);
  const x0 = Math.min(...xs), x1 = Math.max(...xs), y0 = Math.min(...ys), y1 = Math.max(...ys);
  const n = (x1 - x0) * (y1 - y0) * per / 1000;
  for (let i = 0; i < n; i++) {
    const x = x0 + rnd() * (x1 - x0), y = y0 + rnd() * (y1 - y0), q = rnd(), r = 1.500 + rnd() * 2.200, e = .7 + rnd() * .6;
    if (!inside(pts, x, y)) continue;
    if (rnd() < .45) blob('g', x + rnd() * 6 - 3, y + rnd() * 6 - 3, r + 3, r + 1);
    if (q < .62) blob('y', x, y, r * e, r / e + .5);
    else if (q < .84) blob('p', x, y, r, r * e);
    else { blob('y', x, y, r + 1.200); blob('t', x, y, r + .2, r); }
  }
});

// larger buildings
poly('g', '708,468 745,435 775,425 776,445 745,470 730,486 712,480');
[[712, 468], [725, 460], [737, 451], [750, 443], [770, 430], [780, 434], [726, 480], [739, 471], [753, 462], [766, 453]].forEach(([x, y]) => blob('t', x, y, 5, 4.200, .5));
[[666, 429, 5], [656, 409, 4], [720, 315, 4], [774, 301, 5], [816, 348, 5], [842, 507, 5], [812, 508, 4], [890, 448, 5], [692, 411, 4], [780, 257, 4], [752, 249, 3],
 [871, 574, 4], [1015, 582, 5], [981, 580, 4], [961, 600, 4], [900, 612, 4], [957, 630, 4], [938, 640, 4], [1160, 546, 4], [1126, 848, 4], [1156, 861, 5],
 [1273, 825, 5], [1253, 633, 4], [1227, 666, 4], [1311, 705, 5], [1346, 722, 6], [1339, 734, 5], [1331, 743, 6], [1226, 823, 3], [1357, 752, 3]]
  .forEach(([x, y, r]) => { blob('g', x + 2, y + 3, r + 2); blob('y', x, y, r + 1); blob('t', x, y, r - .2); });
[[762, 408, 7, 3], [684, 298, 5, 4], [695, 309, 4, 5], [660, 337, 6, 4], [773, 325, 5, 5], [790, 320, 4, 6], [788, 348, 4, 4], [655, 388, 4, 4], [663, 400, 4, 4],
 [648, 459, 5, 4], [755, 275, 6, 5], [717, 252, 8, 4], [611, 391, 4, 3], [723, 359, 3, 5], [1300, 709, 5, 3], [1316, 763, 10, 3], [1321, 770, 4, 7], [1243, 708, 4, 3], [1300, 745, 4, 4]]
  .forEach(([x, y, a, b]) => blob('y', x, y, a, b));
[[653, 438, 6], [761, 338, 5], [619, 397, 4], [637, 373, 4], [786, 281, 5], [819, 475, 4], [1225, 655, 4], [1265, 670, 4], [1080, 856, 4], [1136, 858, 4], [865, 537, 4]]
  .forEach(([x, y, r]) => blob('p', x, y, r, r * .8));
line('y', 4, '968,560 975,567 988,558 984,546'); line('t', 2, '970,562 975,566 987,557');
line('y', 2, '980,590 990,583 1002,586');

// marshes and lagoons
poly('g', '940,410 967,393 987,403 993,427 1000,453 980,470 975,485 947,472 933,453 932,427');
[[963, 425], [972, 432], [982, 436], [966, 440], [985, 446], [974, 422]].forEach(([x, y]) => blob('r', x, y, 5, 3));
poly('g', '903,456 920,452 945,470 975,485 1010,492 1040,497 1065,505 1068,492 1077,487 1103,497 1107,512 1077,517 1073,533 1090,602 1080,583 1063,570 1045,568 1052,553 1047,533 1023,533 1013,542 1000,523 985,508 950,495 930,475');
poly('b', '942,468 957,468 962,480 976,478 966,486 984,500 960,492 945,480');
poly('b', '1027,507 1028,522 1020,530 1013,541 1007,527 1020,520'); poly('b', '1054,503 1063,505 1066,517 1056,512');
poly('b', '1056,525 1062,520 1064,532 1058,533'); poly('b', '1066,560 1072,562 1070,570'); blob('b', 995, 418, 5, 2, .2); blob('b', 1079, 506, 5, 2, 0);
poly('g', '1150,577 1173,578 1178,603 1175,622 1163,616 1153,600'); poly('b', '1157,580 1164,590 1160,592');
poly('g', '1103,613 1140,617 1150,632 1120,630');
poly('b', '1153,598 1165,613 1150,633 1138,618 1148,610');
poly('g', '1073,663 1090,655 1120,660 1140,678 1160,692 1115,686 1085,675');
[[1113, 672], [1122, 670], [1121, 680], [1131, 676], [1110, 681]].forEach(([x, y]) => blob('b', x, y, 4, 2, .3));
poly('b', '1132,678 1140,682 1143,672 1155,690 1145,693 1132,687');
poly('g', '1127,693 1187,690 1197,647 1210,683 1227,700 1230,727 1220,757 1207,763 1197,753 1183,730 1175,714 1147,712 1130,722');
poly('b', '1184,663 1193,680 1180,690 1160,690 1177,682'); blob('b', 1197, 652, 3, 4, 0);
poly('r', '1210,727 1222,742 1212,762 1203,740');
line('b', 3, '1196,697 1186,712 1200,716 1206,706 1196,697'); line('b', 5, '1208,720 1197,733 1198,748 1203,757'); line('b', 3, '1212,718 1222,730'); line('b', 3, '1222,705 1223,712');
line('g', 2, '1240,730 1220,760 1205,782'); line('g', 3, '1240,755 1245,790'); blob('g', 1112, 735, 6, 4); blob('b', 1113, 736, 2);
line('g', 9, '838,318 845,338 838,355 820,366 799,374 798,395'); blob('b', 797, 383, 2, 3);

// coast: dunes, beach, wet fringe, sea
line('g', 13, '751,218 783,241 810,254 837,272 857,289'); line('y', 3, '757,221 783,240'); line('y', 4, '764,235 775,243'); line('y', 5, '790,250 803,257');
poly('y', '855,284 923,318 943,335 980,358 1043,395 1090,433 1157,478 1193,520 1243,563 1290,605 1317,650 1394,724 1377,741 1370,740 1367,723 1347,711 1330,692 1307,669 1287,655 1270,625 1247,602 1227,577 1207,564 1193,549 1177,532 1157,519 1147,502 1127,495 1113,485 1103,470 1087,455 1067,439 1055,440 1047,425 1027,409 1007,394 980,374 957,359 933,344 910,328 897,319 880,315 865,315 876,308');
line('g', 9, SHORE1); line('g', 5, SHORE2);
line('p', 2, parse(SHORE1).map(([x, y]) => `${x - 1},${y + 2}`).join(' '));
line('p', 2.200, parse(SHORE2).map(([x, y]) => `${x - .5},${y + 1.200}`).join(' '));
const sea = parse('818,120 1450,660 1400,730 1394,724 ' + (SHORE1 + ' ' + SHORE2).split(' ').reverse().join(' ') + ' 740,200');

// per-pixel classification
const hash = (x, y, s) => { let h = (x * 374761393 + y * 668265263 + s * 974634777) | 0; h = Math.imul(h ^ (h >>> 13), 1274126177); return ((h ^ (h >>> 16)) >>> 0) / 4294967296; };
const noise = (x, y, s) => {
  const i = Math.floor(x), j = Math.floor(y), u = x - i, v = y - j, a = u * u * (3 - 2 * u), b = v * v * (3 - 2 * v);
  const t = hash(i, j, s) * (1 - a) + hash(i + 1, j, s) * a, w = hash(i, j + 1, s) * (1 - a) + hash(i + 1, j + 1, s) * a;
  return t * (1 - b) + w * b;
};
const B = base.getImageData(0, 0, W, H).data, D = dens.getImageData(0, 0, W, H).data;
const keys = Object.keys(PAL);
const near = i => {
  let best = 'r', m = 1e9;
  for (const k of keys) { const p = PAL[k], e = (B[i] - p[0]) ** 2 + (B[i + 1] - p[1]) ** 2 + (B[i + 2] - p[2]) ** 2; if (e < m) { m = e; best = k; } }
  return best;
};
const ctx = document.getElementById('map').getContext('2d'), img = ctx.createImageData(W, H), O = img.data;
const edge = parse(OUT);
const clamp = (v, m) => Math.max(0, Math.min(m, v | 0));
for (let y = 0; y < H; y++) for (let x = 0; x < W; x++) {
  const qx = Math.floor(x / 1.250), qy = Math.floor(y / 1.250), fx = qx * 1.250 + OX, fy = qy * 1.250 + OY;
  if (!inside(edge, fx + .6, fy + .6)) continue;
  let k = 'b';
  if (!inside(sea, fx, fy)) {
    // the shoreline stays crisp; inland edges get more displacement
    const shore = inside(sea, fx + 6, fy - 6) ? 2 : 7;
    const jx = clamp(x + (noise(qx / 2.200, qy / 2.200, 1) - .5) * shore, W - 1), jy = clamp(y + (noise(qx / 2.200, qy / 2.200, 2) - .5) * shore, H - 1);
    k = near((jy * W + jx) * 4);
    const u = qx * .8 - qy * .55, v = qx * .55 + qy * .8;
    const n = noise(u / 5, v / 2.800, 3) * .6 + noise(qx / 1.700, qy / 1.700, 4) * .4;
    if (k === 'r') {
      const d = D[(jy * W + jx) * 4] / 255;
      if (n > .83 - .225 * d) k = 'g';
      else if (d > .7 && noise(qx / 2, qy / 2, 9) > .965) k = 'y';
    } else if (k === 'g' && shore > 2 && n < .29) k = 'r';
    else if (k === 'b' && n > .74) k = 'g';
  }
  const c = PAL[k], i0 = (y * W + x) * 4; O[i0] = c[0]; O[i0 + 1] = c[1]; O[i0 + 2] = c[2]; O[i0 + 3] = 255;
}
ctx.putImageData(img, 0, 0);
```
